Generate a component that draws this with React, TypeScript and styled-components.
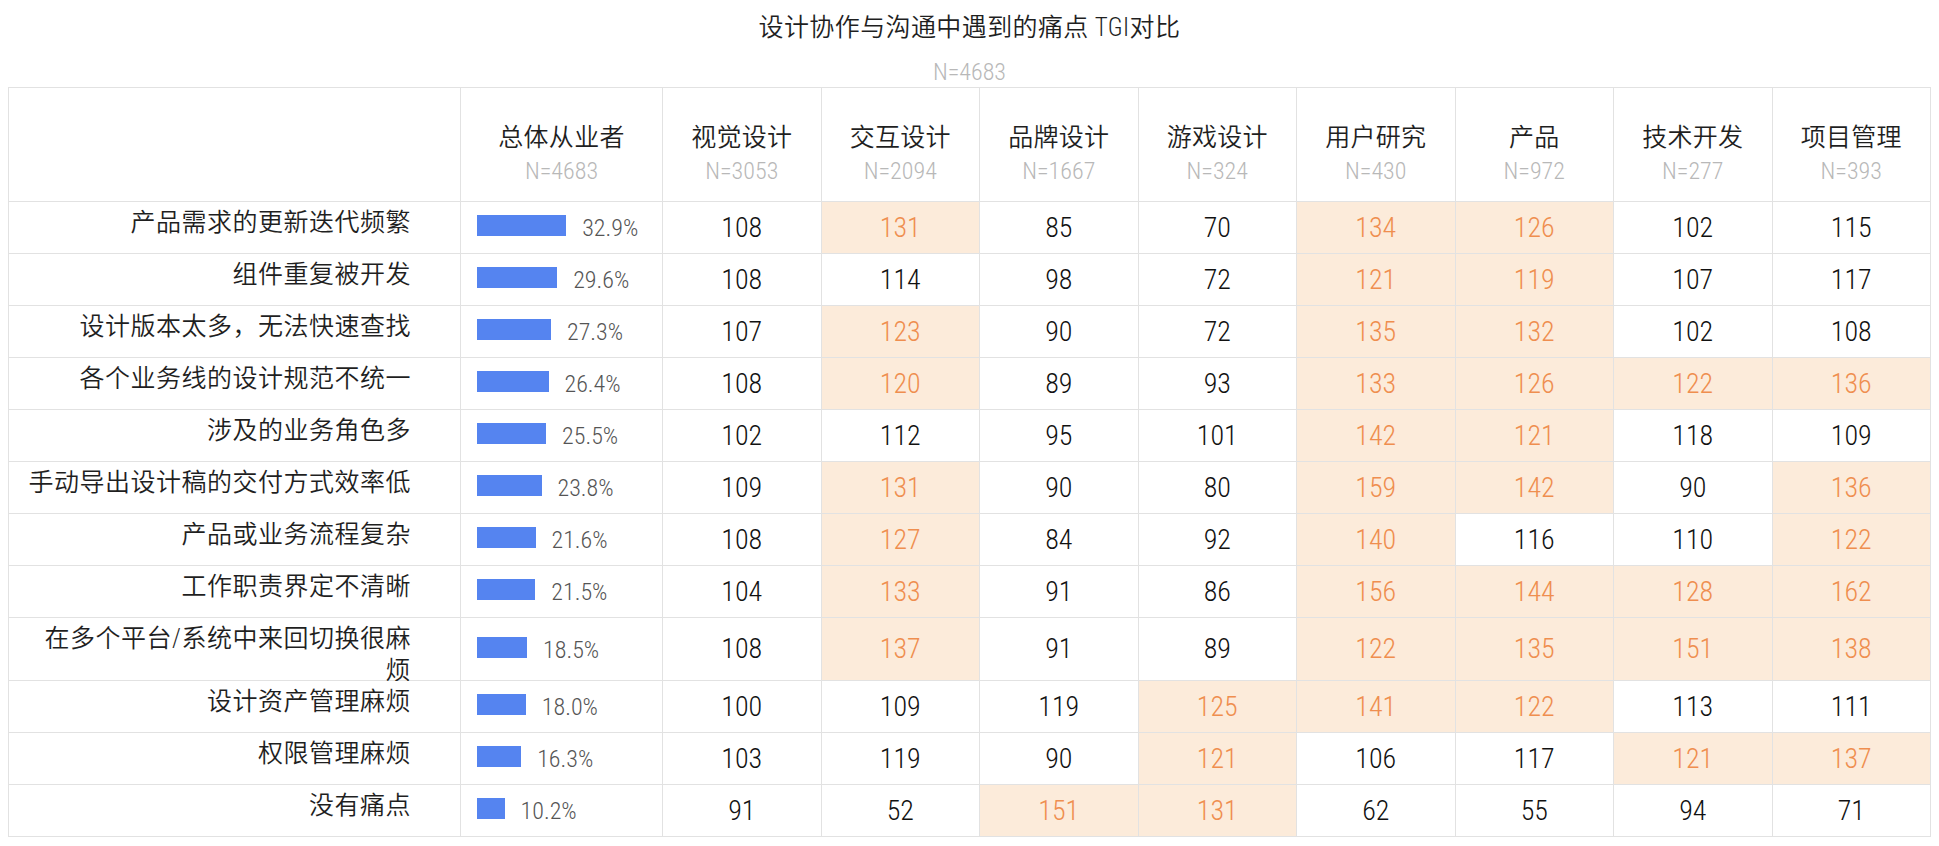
import React from "react";
import styled, { createGlobalStyle } from "styled-components";

const GlobalStyle = createGlobalStyle`
  html, body {
    margin: 0;
    padding: 0;
    background: #ffffff;
  }
  body {
    font-family: "Roboto Condensed", "Roboto", "Noto Sans CJK SC", sans-serif;
    font-stretch: condensed;
    color: #222222;
  }
`;

const Page = styled.div`
  padding: 0 8px;
`;

const Title = styled.h1`
  margin: 0;
  padding-top: 10px;
  font-size: 25px;
  font-weight: 350;
  line-height: 36px;
  text-align: center;
  color: #1f1f1f;
  letter-spacing: 0.4px;
`;

const Subtitle = styled.div`
  margin-top: 11px;
  font-size: 24px;
  font-weight: 300;
  line-height: 30px;
  text-align: center;
  color: #b8b8b8;
`;

const Grid = styled.div`
  display: grid;
  grid-template-columns: 451px 201px repeat(8, 1fr);
  gap: 1px;
  padding: 1px;
  background: #e2e2e2;
`;

const HeadCell = styled.div`
  background: #ffffff;
  min-height: 113px;
  padding-top: 32px;
  box-sizing: border-box;
  display: flex;
  flex-direction: column;
  align-items: center;
`;

const HeadName = styled.div`
  font-size: 25px;
  font-weight: 350;
  line-height: 36px;
  color: #1f1f1f;
  letter-spacing: 0.3px;
`;

const HeadCount = styled.div`
  font-size: 24px;
  font-weight: 300;
  line-height: 30px;
  color: #b8b8b8;
`;

const LabelCell = styled.div`
  background: #ffffff;
  min-height: 51px;
  box-sizing: border-box;
  padding: 5px 49px 0 16px;
  display: flex;
  align-items: flex-start;
  justify-content: flex-end;
`;

const LabelText = styled.div`
  text-align: right;
  font-size: 25px;
  font-weight: 350;
  line-height: 32px;
  letter-spacing: 0.5px;
  color: #1f1f1f;
  margin-bottom: -7px;
`;

const BarCell = styled.div`
  background: #ffffff;
  min-height: 51px;
  box-sizing: border-box;
  padding-left: 16px;
  display: flex;
  align-items: center;
`;

const BarWrap = styled.div`
  display: flex;
  align-items: baseline;
  gap: 16px;
`;

const Bar = styled.div`
  height: 21px;
  background: #5584f0;
`;

const Pct = styled.span`
  font-size: 24px;
  font-weight: 300;
  line-height: 24px;
  color: #555555;
`;

const ValueCell = styled.div<{ $hot?: boolean }>`
  background: ${(p) => (p.$hot ? "#fcebda" : "#ffffff")};
  color: ${(p) => (p.$hot ? "#ef8e4f" : "#111111")};
  min-height: 51px;
  display: flex;
  align-items: center;
  justify-content: center;
  font-size: 28px;
  font-weight: 300;
  line-height: 32px;
`;

const groups: { name: string; n: number }[] = [
  { name: "总体从业者", n: 4683 },
  { name: "视觉设计", n: 3053 },
  { name: "交互设计", n: 2094 },
  { name: "品牌设计", n: 1667 },
  { name: "游戏设计", n: 324 },
  { name: "用户研究", n: 430 },
  { name: "产品", n: 972 },
  { name: "技术开发", n: 277 },
  { name: "项目管理", n: 393 },
];

type Row = { label: string; pct: number; values: number[]; hot: number[] };

const rows: Row[] = [
  { label: "产品需求的更新迭代频繁", pct: 32.9, values: [108, 131, 85, 70, 134, 126, 102, 115], hot: [1, 4, 5] },
  { label: "组件重复被开发", pct: 29.6, values: [108, 114, 98, 72, 121, 119, 107, 117], hot: [4, 5] },
  { label: "设计版本太多，无法快速查找", pct: 27.3, values: [107, 123, 90, 72, 135, 132, 102, 108], hot: [1, 4, 5] },
  { label: "各个业务线的设计规范不统一", pct: 26.4, values: [108, 120, 89, 93, 133, 126, 122, 136], hot: [1, 4, 5, 6, 7] },
  { label: "涉及的业务角色多", pct: 25.5, values: [102, 112, 95, 101, 142, 121, 118, 109], hot: [4, 5] },
  { label: "手动导出设计稿的交付方式效率低", pct: 23.8, values: [109, 131, 90, 80, 159, 142, 90, 136], hot: [1, 4, 5, 7] },
  { label: "产品或业务流程复杂", pct: 21.6, values: [108, 127, 84, 92, 140, 116, 110, 122], hot: [1, 4, 7] },
  { label: "工作职责界定不清晰", pct: 21.5, values: [104, 133, 91, 86, 156, 144, 128, 162], hot: [1, 4, 5, 6, 7] },
  { label: "在多个平台/系统中来回切换很麻烦", pct: 18.5, values: [108, 137, 91, 89, 122, 135, 151, 138], hot: [1, 4, 5, 6, 7] },
  { label: "设计资产管理麻烦", pct: 18.0, values: [100, 109, 119, 125, 141, 122, 113, 111], hot: [3, 4, 5] },
  { label: "权限管理麻烦", pct: 16.3, values: [103, 119, 90, 121, 106, 117, 121, 137], hot: [3, 6, 7] },
  { label: "没有痛点", pct: 10.2, values: [91, 52, 151, 131, 62, 55, 94, 71], hot: [2, 3] },
];

export default function App() {
  return (
    <Page>
      <GlobalStyle />
      <Title>设计协作与沟通中遇到的痛点 TGI对比</Title>
      <Subtitle>N=4683</Subtitle>
      <Grid>
        <HeadCell />
        {groups.map((g) => (
          <HeadCell key={g.name}>
            <HeadName>{g.name}</HeadName>
            <HeadCount>N={g.n}</HeadCount>
          </HeadCell>
        ))}
        {rows.map((r) => (
          <React.Fragment key={r.label}>
            <LabelCell>
              <LabelText>{r.label}</LabelText>
            </LabelCell>
            <BarCell>
              <BarWrap>
                <Bar style={{ width: `${(r.pct * 2.71).toFixed(1)}px` }} />
                <Pct>{r.pct.toFixed(1)}%</Pct>
              </BarWrap>
            </BarCell>
            {r.values.map((v, i) => (
              <ValueCell key={i} $hot={r.hot.includes(i)}>
                {v}
              </ValueCell>
            ))}
          </React.Fragment>
        ))}
      </Grid>
    </Page>
  );
}
